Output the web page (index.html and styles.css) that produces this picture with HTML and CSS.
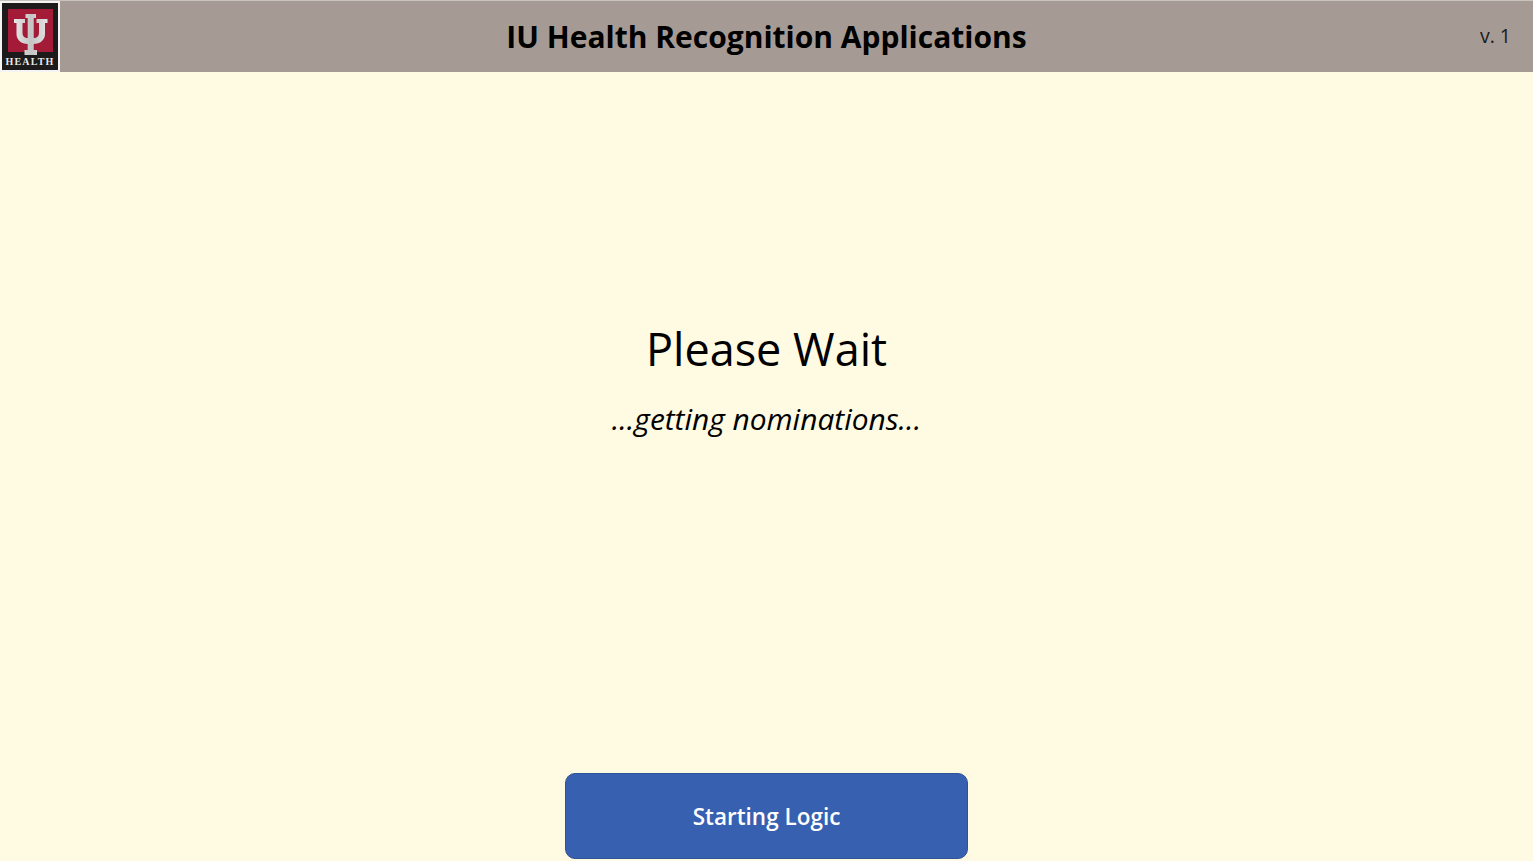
FILE: index.html
```html
<!DOCTYPE html>
<html lang="en">
<head>
    <meta charset="UTF-8">
    <title>IU Health Recognition Applications</title>
    <link rel="stylesheet" href="styles.css">
</head>
<body>

<header class="topbar">
    <div class="logo">
        <svg class="trident" viewBox="0 0 45 43" width="45" height="43">
            <defs>
                <linearGradient id="steel" x1="0" y1="0" x2="1" y2="0">
                    <stop offset="0" stop-color="#e6e6e6"/>
                    <stop offset="0.5" stop-color="#c4c4c4"/>
                    <stop offset="1" stop-color="#e2e2e2"/>
                </linearGradient>
            </defs>
            <rect width="45" height="43" fill="#a31b36"/>
            <path d="M17.500 5H28V9H25.700V29C29 29 31 27 31 24V14H28.500V10H39.500V14H37V25C37 31 32 35 25.700 35V41H29V46H16.500V41H19.700V35C13.500 35 8.500 31 8.500 25V14H6V10H17V14H14.500V24C14.500 27 16.500 29 19.700 29V9H17.500Z" fill="url(#steel)"/>
        </svg>
        <span class="logo-text">HEALTH</span>
    </div>
    <h1 class="title">IU Health Recognition Applications</h1>
    <span class="version">v. 1</span>
</header>

<main class="content">
    <h2 class="wait">Please Wait</h2>
    <p class="status">...getting nominations...</p>
    <button class="logic-btn">Starting Logic</button>
</main>

</body>
</html>
```

FILE: styles.css
```css
html, body {
    height: 100%;
}

body {
    margin: 0;
    display: flex;
    flex-direction: column;
    background: #fffae2;
    font-family: 'Open Sans', sans-serif;
    color: #000;
    overflow: hidden;
}

.topbar {
    height: 72px;
    flex-shrink: 0;
    display: flex;
    align-items: center;
    box-sizing: border-box;
    background: #a59b94;
    border-top: 1px solid #c9c4bf;
    position: relative;
}

.logo {
    width: 60px;
    height: 71px;
    box-sizing: border-box;
    flex-shrink: 0;
    background: #1c1a1a;
    border: 2px solid #f4f4f4;
    display: flex;
    flex-direction: column;
    align-items: center;
    padding-top: 6px;
    overflow: hidden;
}

.trident {
    display: block;
    flex-shrink: 0;
    overflow: visible;
}

.logo-text {
    font-family: 'Liberation Serif', serif;
    font-size: 10px;
    font-weight: 700;
    line-height: 12px;
    letter-spacing: 1.200px;
    color: #e8e8e8;
    margin-top: 4px;
}

.title {
    margin: 0;
    flex: 1;
    text-align: center;
    font-size: 30px;
    font-weight: 700;
    padding-right: 60px;
}

.version {
    position: absolute;
    right: 22px;
    top: 21px;
    font-size: 19.500px;
    line-height: 27px;
    color: #1a1a1a;
}

.content {
    flex: 1;
    display: flex;
    flex-direction: column;
    align-items: center;
}

.wait {
    margin: 249px 0 0;
    font-size: 45px;
    line-height: 56px;
    font-weight: 400;
}

.status {
    margin: 22px 0 0;
    font-size: 29.900px;
    line-height: 40px;
    font-style: italic;
}

.logic-btn {
    margin-top: auto;
    margin-bottom: 2px;
    width: 403px;
    height: 86px;
    box-sizing: border-box;
    padding: 0;
    background: #3760b0;
    border: 1px solid #2f5396;
    border-radius: 10px;
    color: #fff;
    font-family: inherit;
    font-size: 22.500px;
    font-weight: 600;
}
```
